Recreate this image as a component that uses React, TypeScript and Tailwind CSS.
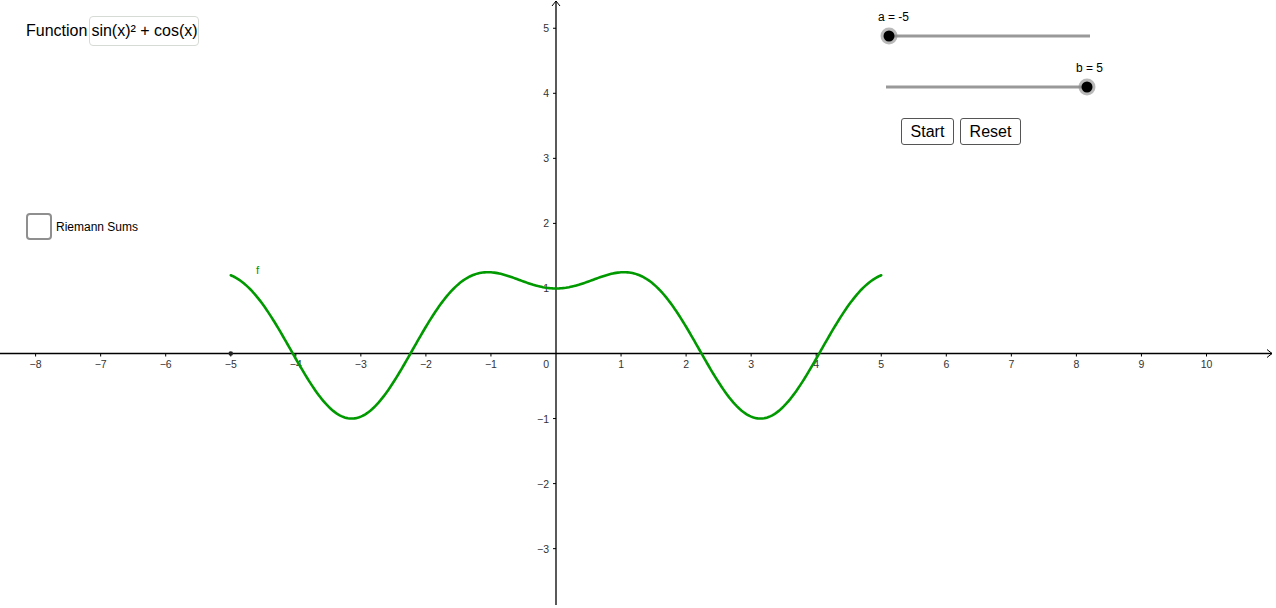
import React from 'react';

// graph coordinate system
const OX = 556;
const OY = 353.5;
const U = 65.05;

const px = (x: number) => OX + x * U;
const py = (y: number) => OY - y * U;

const f = (x: number) => Math.sin(x) ** 2 + Math.cos(x);

const buildPath = () => {
  const pts: string[] = [];
  const steps = 400;
  for (let i = 0; i <= steps; i++) {
    const x = -5 + (10 * i) / steps;
    pts.push(`${i === 0 ? 'M' : 'L'}${px(x).toFixed(2)},${py(f(x)).toFixed(2)}`);
  }
  return pts.join(' ');
};

const xTicks = [-8, -7, -6, -5, -4, -3, -2, -1, 1, 2, 3, 4, 5, 6, 7, 8, 9, 10];
const yTicks = [-3, -2, -1, 1, 2, 3, 4, 5];

const label = (n: number) => (n < 0 ? `\u2212${Math.abs(n)}` : `${n}`);

const FONT = '"Liberation Sans", Arial, sans-serif';

const Graph: React.FC = () => (
  <svg className="absolute inset-0" width={1276} height={608} viewBox="0 0 1276 608">
    {/* axes */}
    <line x1={0} y1={OY} x2={1272} y2={OY} stroke="#000" strokeWidth={1.3} />
    <path d={`M1267,${OY - 4} L1272,${OY} L1267,${OY + 4}`} fill="none" stroke="#000" strokeWidth={1} />
    <line x1={OX} y1={1} x2={OX} y2={605} stroke="#000" strokeWidth={1.3} />
    <path d={`M${OX - 4},6 L${OX},1 L${OX + 4},6`} fill="none" stroke="#000" strokeWidth={1} />

    {/* ticks + labels */}
    <g fontFamily={FONT} fontSize={10.5} fill="#333">
      {xTicks.map((n) => (
        <g key={`x${n}`}>
          <line x1={px(n)} y1={OY} x2={px(n)} y2={OY + 3} stroke="#000" strokeWidth={1} />
          <text x={px(n)} y={OY + 14.5} textAnchor="middle">{label(n)}</text>
        </g>
      ))}
      {yTicks.map((n) => (
        <g key={`y${n}`}>
          <line x1={OX - 3} y1={py(n)} x2={OX} y2={py(n)} stroke="#000" strokeWidth={1} />
          <text x={OX - 7} y={py(n) + 4} textAnchor="end">{label(n)}</text>
        </g>
      ))}
      <text x={OX - 7} y={OY + 14.5} textAnchor="end">0</text>
    </g>

    {/* function */}
    <path d={buildPath()} fill="none" stroke="#009900" strokeWidth={2.6} strokeLinecap="round" />
    <text x={256} y={274} fontFamily={FONT} fontSize={11.5} fill="#009900">f</text>

    {/* point at a */}
    <circle cx={px(-5)} cy={OY} r={2.3} fill="#222" />

    {/* sliders */}
    <line x1={889} y1={36} x2={1090} y2={36} stroke="#999" strokeWidth={3} />
    <circle cx={889} cy={36} r={8.5} fill="#8a8a8a" fillOpacity={0.6} />
    <circle cx={889} cy={36} r={5.5} fill="#000" />
    <text x={878} y={21} fontFamily={FONT} fontSize={12} fill="#000">a = -5</text>

    <line x1={886} y1={87} x2={1088} y2={87} stroke="#999" strokeWidth={3} />
    <circle cx={1087} cy={87} r={8.5} fill="#8a8a8a" fillOpacity={0.6} />
    <circle cx={1087} cy={87} r={5.5} fill="#000" />
    <text x={1076} y={72} fontFamily={FONT} fontSize={12} fill="#000">b = 5</text>
  </svg>
);

const App: React.FC = () => {
  return (
    <div className="relative w-[1276px] h-[608px] overflow-hidden bg-white font-['Liberation_Sans',Arial,sans-serif] text-black">
      <Graph />

      {/* function input */}
      <div className="absolute left-[26px] top-[16px] flex items-center h-[30px]">
        <span className="text-[16px] leading-none">Function</span>
        <div className="ml-[2px] h-[30px] w-[110px] rounded-[4px] border border-[#d6dbd6] bg-white flex items-center pl-[1px] text-[16px] leading-none whitespace-nowrap overflow-hidden">
          sin(x)² + cos(x)
        </div>
      </div>

      {/* checkbox */}
      <div className="absolute left-[26px] top-[213px] flex items-center gap-[4px]">
        <div className="w-[26px] h-[27px] rounded-[4px] border-2 border-[#8f8f8f] bg-white" />
        <span className="text-[12px] leading-none">Riemann Sums</span>
      </div>

      {/* buttons */}
      <div className="absolute left-[901px] top-[118px] flex gap-[6px]">
        <button className="h-[27px] w-[53px] rounded-[3px] border border-[#555] bg-white text-[16px] leading-none">
          Start
        </button>
        <button className="h-[27px] w-[61px] rounded-[3px] border border-[#555] bg-white text-[16px] leading-none">
          Reset
        </button>
      </div>
    </div>
  );
};

export default App;
